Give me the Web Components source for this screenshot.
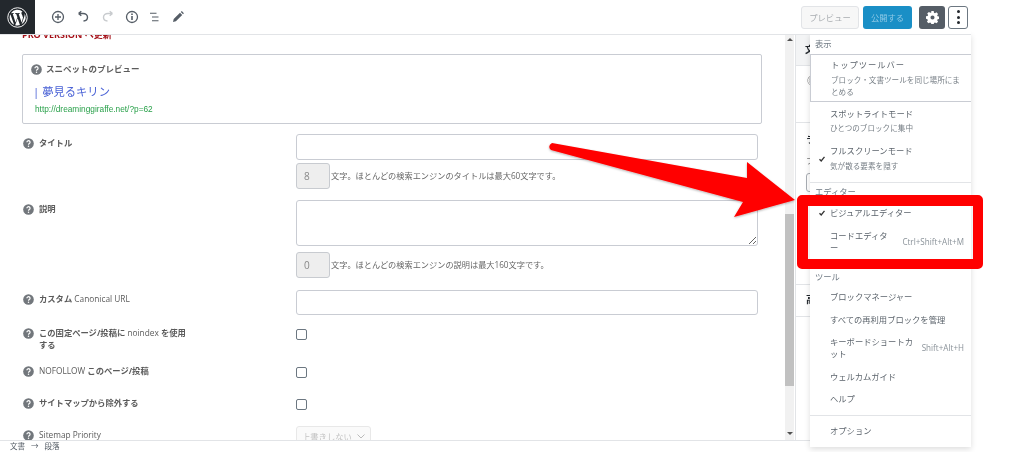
<!DOCTYPE html>
<html lang="ja"><head><meta charset="utf-8">
<style>
html,body{margin:0;height:452px;overflow:hidden;background:#fff}
body{font-family:"Open Sans","Noto Sans CJK JP",sans-serif;color:#555}
</style></head><body>
<wp-editor>
  <wp-topbar slot="top"></wp-topbar>
  <seo-form slot="main"></seo-form>
  <wp-menu slot="overlay"></wp-menu>
  <red-note slot="overlay"></red-note>
</wp-editor>
<script>
const Q='<svg class="q" width="11" height="11" viewBox="0 0 12 12"><circle cx="6" cy="6" r="5.8" fill="#72777c"/><path d="M4.300 4.700a1.700 1.700 0 1 1 2.600 1.400c-.6.400-.9.600-.9 1.200" fill="none" stroke="#fff" stroke-width="1.300"/><circle cx="6" cy="9.100" r=".8" fill="#fff"/></svg>';
const CK='<svg width="6" height="6" viewBox="0 0 6 6" style="display:block"><path d="M.5 3.200 2.200 5 5.500 .8" fill="none" stroke="#333" stroke-width="1.300"/></svg>';
const FONT='"Open Sans","Noto Sans CJK JP",sans-serif';
function def(name,html){customElements.define(name,class extends HTMLElement{connectedCallback(){if(this.shadowRoot)return;const r=this.attachShadow({mode:'open'});r.innerHTML=typeof html==='function'?html(this):html;}});}

def('wp-editor',`<style>
:host{display:block;position:relative;width:1024px;height:452px;overflow:hidden;background:#fff;filter:blur(.3px)}
.app{width:971px;height:452px;display:grid;grid-template-rows:35px 405px 12px}
.body{display:grid;grid-template-columns:785px 9px 1fr;min-height:0;overflow:hidden}
.bar{background:#f1f1f1;display:flex;flex-direction:column;align-items:center;justify-content:space-between;position:relative}
.thumb{position:absolute;left:0;right:0;top:179px;height:172px;background:#c1c1c1}
.ar{border-left:3px solid transparent;border-right:3px solid transparent}
.up{border-bottom:3px solid #505050;margin-top:3px}.dn{border-top:3px solid #505050;margin-bottom:5px}
.side{background:#fff;margin-left:1px;border-left:1px solid #e2e4e7;overflow:hidden;font:700 9px/12px ${FONT};color:#23282d}
.head{height:31px;background:#f3f4f5;border-bottom:1px solid #e2e4e7;padding:9px 0 0 9px;box-sizing:border-box}
.s1{height:57px;border-bottom:1px solid #e2e4e7;box-sizing:border-box;padding:9px 0 0 11px;color:#777}
.s2{height:162px;border-bottom:1px solid #e2e4e7;box-sizing:border-box;padding:11px 0 0 10px}
.s2 i{display:block;font:normal 8px/12px ${FONT};color:#777;margin-top:9px}
.s2 b{display:block;box-sizing:border-box;width:30px;height:19px;border:1px solid #a8adb3;border-radius:3px;margin:6px 0 0 0}
.s3{height:32px;border-bottom:1px solid #e2e4e7;box-sizing:border-box;padding:9px 0 0 10px}
.status{border-top:1px solid #e2e4e7;background:#fff;font:7.500px/10px ${FONT};color:#555d66;padding-left:10px;display:flex;gap:6px;white-space:nowrap}
</style>
<div class="app"><slot name="top"></slot>
<div class="body"><slot name="main"></slot>
<div class="bar"><span class="ar up"></span><div class="thumb"></div><span class="ar dn"></span></div>
<div class="side"><div class="head">文</div><div class="s1">◎</div><div class="s2">ラ<i>フ</i><b></b></div><div class="s3">高</div></div>
</div>
<div class="status"><span>文書</span><span>→</span><span>段落</span></div></div>
<slot name="overlay"></slot>`);

def('wp-topbar',`<style>
:host{display:flex;align-items:center;height:35px;box-sizing:border-box;border-bottom:1px solid #e2e4e7;background:#fff;font-family:${FONT};position:relative;z-index:1}
.logo{width:35px;height:34px;background:#23282d;display:flex;align-items:center;justify-content:center;flex:none}
.tools{display:flex;margin-left:15px;align-items:center}
.tools svg{display:block}
.sp{flex:1}
.btn{box-sizing:border-box;height:23px;border-radius:3px;font-size:8.300px;display:flex;align-items:center;justify-content:center}
.pv{width:58px;border:1px solid #e2e4e7;background:#f7f7f7;color:#a9adb1;margin-right:4px}
.pb{width:49px;background:#1a8fc6;color:#8fc9e6;margin-right:7px}
.gear{width:26px;background:#555d66;margin-right:3px}
.more{width:20px;border:1px solid #6c7781;background:#fff;margin-right:3px;flex-direction:column;gap:2.500px}
.more i{width:3px;height:3px;border-radius:50%;background:#23282d}
</style>
<div class="logo"><svg width="21" height="21" viewBox="0 0 20 20"><circle cx="10" cy="10" r="9.300" fill="none" stroke="#fff" stroke-width=".9"/><path fill="#fff" d="M2.500 10c0 3 1.700 5.600 4.300 6.800L3.200 6.900A7.500 7.500 0 0 0 2.500 10zm12.500-.4c0-.9-.3-1.600-.6-2.100-.4-.6-.7-1.100-.7-1.700 0-.7.500-1.300 1.200-1.300h.1A7.500 7.500 0 0 0 3.700 5.900h.5c.8 0 2-.1 2-.1.400 0 .5.600.1.600 0 0-.4 0-.9.100l2.800 8.300 1.700-5-1.200-3.300c-.4 0-.8-.1-.8-.1-.4 0-.4-.7 0-.6 0 0 1.300.1 2 .1.800 0 2-.1 2-.1.400 0 .5.600.1.600 0 0-.4 0-.9.100l2.800 8.200.8-2.600c.3-1.100.6-1.900.6-2.500zm-4.900 1-2.300 6.700a7.500 7.500 0 0 0 4.600-.1l-.1-.1-2.200-6.500zm6.600-4.400c0 .3.100.6.100 1 0 .7-.1 1.600-.6 2.700l-2.300 6.600a7.500 7.500 0 0 0 2.800-10.300z"/></svg></div>
<div class="tools">
<svg width="16" height="16" viewBox="0 0 16 16" fill="none" stroke="#555d66" stroke-width="1.300"><circle cx="8" cy="8" r="5.500"/><path d="M8 5v6M5 8h6"/></svg>
<svg style="margin-left:9px" width="16" height="16" viewBox="0 0 16 16" fill="none" stroke="#555d66" stroke-width="1.400"><path d="M3.500 4.500l2.800-2.300M3.500 4.500l2.800 2.300M3.500 4.500H8c2.700 0 4.500 1.600 4.500 3.700 0 2-1.500 3.600-4 3.800"/></svg>
<svg style="margin-left:9px" width="16" height="16" viewBox="0 0 16 16" fill="none" stroke="#c8cbce" stroke-width="1.400"><path d="M12.500 4.500L9.700 2.200M12.500 4.500L9.700 6.800M12.500 4.500H8C5.300 4.500 3.500 6.100 3.500 8.200c0 2 1.500 3.600 4 3.800"/></svg>
<svg style="margin-left:8px" width="16" height="16" viewBox="0 0 16 16" fill="none" stroke="#555d66" stroke-width="1.300"><circle cx="8" cy="8" r="5.500"/><path d="M8 7.100v4" stroke-width="1.600"/><path d="M8 4.600v1.400" stroke-width="1.600"/></svg>
<svg style="margin-left:7px" width="16" height="16" viewBox="0 0 16 16" fill="none" stroke="#555d66" stroke-width="1.100"><path d="M3 4.200h6.500M5 8h6.500M5 11.800h6.500"/></svg>
<svg style="margin-left:7px" width="16" height="16" viewBox="0 0 16 16" fill="#555d66"><path d="M3 13l.7-2.900L10 3.800l2.200 2.200L5.900 12.300zM10.800 3l1-.9 2.100 2.100-.9 1z"/></svg>
</div><span class="sp"></span>
<div class="btn pv">プレビュー</div><div class="btn pb">公開する</div>
<div class="btn gear"><svg width="13" height="13" viewBox="0 0 14 14"><path fill="#fff" fill-rule="evenodd" d="M5.700 0h2.600l.3 1.800 1.100.5 1.500-1 1.800 1.800-1 1.500.5 1.100 1.800.3v2.600l-1.800.3-.5 1.100 1 1.500-1.800 1.800-1.500-1-1.100.5-.3 1.800H5.700l-.3-1.800-1.100-.5-1.500 1-1.800-1.800 1-1.500-.5-1.100L0 8.300V5.700l1.800-.3.500-1.100-1-1.500 1.800-1.800 1.500 1 1.100-.5zM7 4.800a2.200 2.200 0 1 0 0 4.400 2.200 2.200 0 0 0 0-4.400z"/></svg></div>
<div class="btn more"><i></i><i></i><i></i></div>`);

def('seo-row',`<style>
:host{display:grid;grid-template-columns:274px 462px;padding-left:22px}
.l{display:flex;gap:5px;font:700 8.300px/12px ${FONT};color:#5b5b5b;padding:3px 100px 0 1px;box-sizing:border-box}
.q{flex:none;margin-top:1px}
.c{min-width:0}
</style><div class="l">${Q}<span><slot name="label"></slot></span></div><div class="c"><slot></slot></div>`);

def('seo-count',`<style>
:host{display:flex;align-items:center;gap:1px;font:8.200px ${FONT};color:#666;height:26px}
.n{box-sizing:border-box;width:34px;height:26px;border:1px solid #c8cbd0;border-radius:3px;background:#eee;color:#888;font-size:10px;line-height:24px;padding-left:7px}
span{margin-top:-2px}
</style><div class="n"><slot name="n"></slot></div><span><slot></slot></span>`);

def('seo-input',el=>{const multi=el.hasAttribute('multi');return `<style>
:host{display:block;height:${multi?46:(el.getAttribute('h')||26)}px}
input,textarea{display:block;box-sizing:border-box;width:100%;height:100%;margin:0;border:1px solid #c9ccd3;border-radius:3px;background:#fff;padding:0;outline:0;resize:vertical}
</style>${multi?'<textarea></textarea>':'<input type="text">'}`;});

def('seo-check',`<style>
:host{display:block;width:11px;height:11px;margin-top:5px}
input{appearance:none;display:block;box-sizing:border-box;width:11px;height:11px;margin:0;border:1px solid #6c7781;border-radius:2px;background:#fff}
</style><input type="checkbox">`);

def('seo-form',`<style>
:host{display:block;overflow:hidden;min-height:0;background:#fff;font-family:${FONT}}
.pro{font:700 9px/12px ${FONT};color:#a5121a;margin:-6px 0 0 22px;height:25px;white-space:nowrap}
.snip{box-sizing:border-box;margin-left:22px;width:740px;height:70px;border:1px solid #c9ccd3;border-radius:2px;padding:0 8px}
.h{display:flex;gap:4px;align-items:center;font:700 8.500px/14px ${FONT};color:#5b5b5b;margin-top:7px}
.t{font:11.300px/18px ${FONT};color:#4a62d6;margin:7px 0 0 2px}
.u{font:8.300px/12px "Liberation Sans",sans-serif;color:#2aa14b;margin:2px 0 0 4px}
.sel{box-sizing:border-box;width:75px;height:20px;border:1px solid #e8e8e8;border-radius:3px;background:#fafafa;color:#c4c4c4;font-size:8.300px;line-height:17px;padding-left:5px;display:flex;gap:5px;align-items:center}
</style>
<div class="pro">PRO VERSION へ更新</div>
<div class="snip"><div class="h">${Q}スニペットのプレビュー</div><div class="t">| 夢見るキリン</div><div class="u">http://dreaminggiraffe.net/?p=62</div></div>
<seo-row style="margin-top:10px"><span slot="label">タイトル</span><seo-input></seo-input><div style="height:3px"></div><seo-count><span slot="n">8</span>文字。ほとんどの検索エンジンのタイトルは最大60文字です。</seo-count></seo-row>
<seo-row style="margin-top:11px"><span slot="label">説明</span><seo-input multi></seo-input><div style="height:6px"></div><seo-count><span slot="n">0</span>文字。ほとんどの検索エンジンの説明は最大160文字です。</seo-count></seo-row>
<seo-row style="margin-top:12px"><span slot="label">カスタム <span style="font-weight:400">Canonical URL</span></span><seo-input h="25"></seo-input></seo-row>
<seo-row style="margin-top:9px"><span slot="label">この固定ページ/投稿に <span style="font-weight:400">noindex</span> を使用<br>する</span><seo-check></seo-check></seo-row>
<seo-row style="margin-top:11px"><span slot="label"><span style="font-weight:400">NOFOLLOW</span> このページ/投稿</span><seo-check></seo-check></seo-row>
<seo-row style="margin-top:16px"><span slot="label">サイトマップから除外する</span><seo-check></seo-check></seo-row>
<seo-row style="margin-top:16px"><span slot="label"><span style="font-weight:400">Sitemap Priority</span></span><div class="sel">上書きしない<svg width="8" height="5" viewBox="0 0 8 5"><path d="M.5.500 4 4 7.500.5" fill="none" stroke="#bbb"/></svg></div></seo-row>`);

def('menu-item',`<style>
:host{display:grid;grid-template-columns:20px var(--w,minmax(0,1fr)) var(--x,auto);padding-right:7px;font:8.300px/12px ${FONT};color:#5c646c}
.ck{grid-column:1;align-self:center;padding-left:9px}
.m{grid-column:2;min-width:0}
.s{grid-column:3;font-size:8.100px;color:#8a9299;white-space:nowrap;align-self:center;justify-self:end}
</style><span class="ck"><slot name="check"></slot></span><span class="m"><slot></slot></span><span class="s"><slot name="short"></slot></span>`);

def('wp-menu',`<style>
:host{position:absolute;left:810px;top:34px;width:161px;height:413px;background:#fff;box-shadow:0 2px 6px rgba(0,0,0,.14);font-family:${FONT};display:block}
.cap{font:8.300px/14px ${FONT};color:#6c7781;padding:0 5px}
.d{display:block;font-size:7.600px;line-height:12px;color:#777f86;margin-top:2px}
.g{border-top:1px solid #e2e4e7}
.sel{box-sizing:border-box;height:48px;border:1px solid #c9ccd3;border-right:0;padding-top:4px;margin-top:3px}
.sel .d{margin-top:3px}
.arrow{position:absolute;left:145px;top:-4px;width:7px;height:7px;background:#fff;transform:rotate(45deg)}
</style>
<div class="arrow"></div>
<div class="cap" style="padding-top:3px">表示</div>
<div class="sel"><menu-item><span style="letter-spacing:.95px">トップツールバー</span><span class="d">ブロック・文書ツールを同じ場所にまとめる</span></menu-item></div>
<menu-item style="margin-top:6px">スポットライトモード<span class="d">ひとつのブロックに集中</span></menu-item>
<menu-item style="margin-top:11px"><span slot="check">${CK}</span>フルスクリーンモード<span class="d" style="margin-top:3px">気が散る要素を隠す</span></menu-item>
<div class="g" style="margin-top:10px;padding-top:2px"><div class="cap">エディター</div>
<menu-item style="margin-top:8px"><span slot="check">${CK}</span>ビジュアルエディター</menu-item>
<menu-item style="margin-top:11px;--w:60px;--x:1fr">コードエディター<span slot="short">Ctrl+Shift+Alt+M</span></menu-item></div>
<div class="g" style="margin-top:12px;padding-top:3px"><div class="cap">ツール</div>
<menu-item style="margin-top:7px">ブロックマネージャー</menu-item>
<menu-item style="margin-top:11px">すべての再利用ブロックを管理</menu-item>
<menu-item style="margin-top:10px;--w:84px;--x:1fr">キーボードショートカット<span slot="short">Shift+Alt+H</span></menu-item>
<menu-item style="margin-top:11px">ウェルカムガイド</menu-item>
<menu-item style="margin-top:10px">ヘルプ</menu-item></div>
<div class="g" style="margin-top:10px;padding-top:9px"><menu-item>オプション</menu-item></div>`);

def('red-note',`<style>
:host{position:absolute;left:0;top:0;width:1024px;height:452px;pointer-events:none}
svg{display:block}
</style>
<svg width="1024" height="452" viewBox="0 0 1024 452"><defs><filter id="f" x="-5%" y="-5%" width="110%" height="110%"><feDropShadow dx="0" dy="1" stdDeviation="1" flood-color="#000" flood-opacity=".3"/></filter></defs>
<path filter="url(#f)" fill="#f00" d="M552 143 747 178 747 162 795 200 734 217 743 202 551 150Q547 146 552 143Z"/>
<path fill="#f00" fill-rule="evenodd" d="M802 195H978a5 5 0 0 1 5 5V264a5 5 0 0 1-5 5H802a5 5 0 0 1-5-5V200a5 5 0 0 1 5-5ZM808 206V259H973V206Z"/></svg>`);
</script></body></html>
